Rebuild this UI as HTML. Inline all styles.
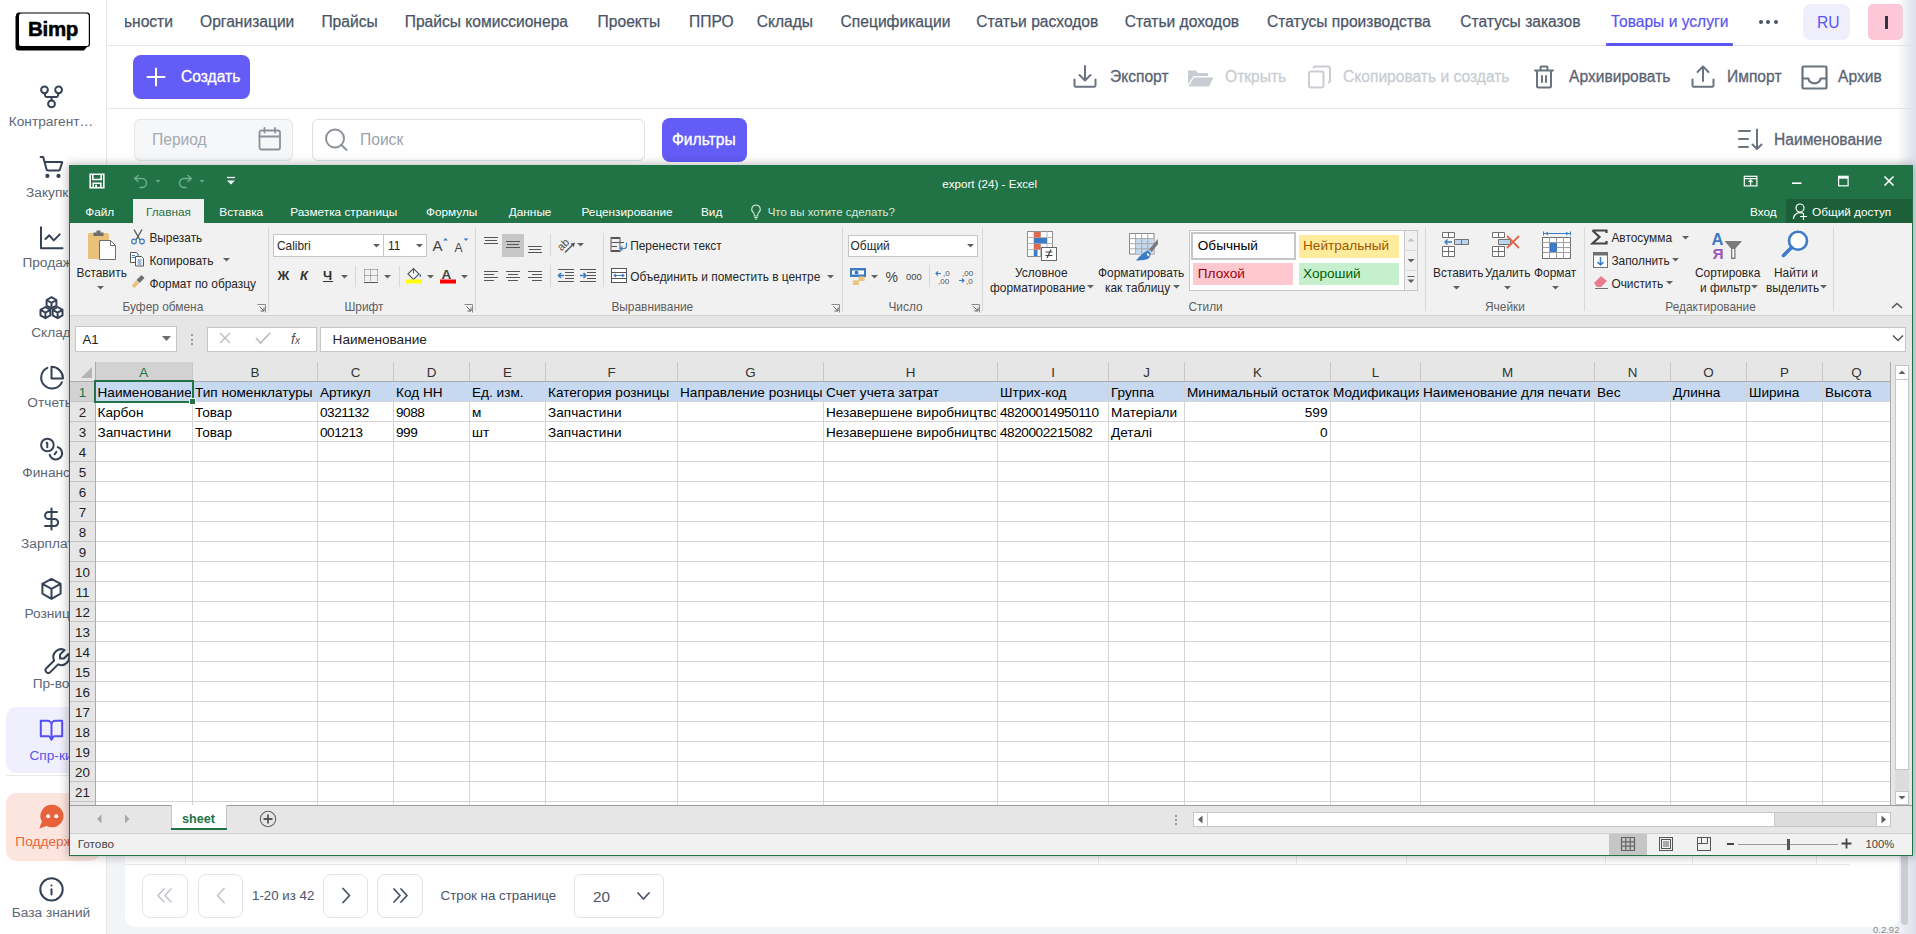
<!DOCTYPE html>
<html><head><meta charset="utf-8"><title>Bimp</title><style>
*{box-sizing:border-box;margin:0;padding:0}
html,body{width:1916px;height:934px;overflow:hidden;background:#f3f4f6;font-family:"Liberation Sans",sans-serif}
.a{position:absolute}
.t{position:absolute;white-space:nowrap;line-height:1}
/* Bimp app */
#side{position:absolute;left:0;top:0;width:107px;height:934px;background:#fff;border-right:1px solid #e6e8ec}
.sl{position:absolute;left:0;width:102px;text-align:center;font-size:13.7px;color:#5c6676;line-height:1;white-space:nowrap}
.sl2{position:absolute;white-space:nowrap;font-size:13.7px;color:#5c6676;line-height:1}
#top{position:absolute;left:107px;top:0;width:1809px;height:46px;background:#fff;border-bottom:1px solid #e5e7eb}
.nav{position:absolute;top:14px;font-size:15.6px;color:#4a5567;white-space:nowrap;line-height:1;-webkit-text-stroke:0.25px #4a5567}
#tb{position:absolute;left:107px;top:46px;width:1809px;height:63px;background:#fff;border-bottom:1px solid #e5e7eb}
#fr{position:absolute;left:107px;top:109px;width:1809px;height:60px;background:#fff}
.act{position:absolute;top:69px;font-size:16px;color:#4a5567;white-space:nowrap;line-height:1;-webkit-text-stroke:0.3px #4a5567}
.dis{color:#c8ccd2;-webkit-text-stroke:0.3px #c8ccd2}

</style></head><body>
<div id="side">
<svg class="a" style="left:14px;top:11px" width="77" height="41" viewBox="0 0 77 41"><path d="M5 1.5 H73 a3 3 0 0 1 3 3 V33 a3 3 0 0 1 -3 3 H5 a3 3 0 0 1 -3 -3 V4.5 a3 3 0 0 1 3 -3Z" fill="#000"/><path d="M2 5 L5 1.5 V36 H73 L70 39.5 H4.5 a3 3 0 0 1 -3 -3 V5Z" fill="#000"/><rect x="5" y="2.6" width="69.8" height="32.4" rx="2.6" fill="#fff"/></svg>
<div class="t" style="left:28px;top:19.3px;font-size:20.5px;font-weight:bold;color:#000;letter-spacing:-0.3px;-webkit-text-stroke:0.5px #000">Bimp</div>
<svg class="a" style="left:30px;top:80px" width="40" height="30" viewBox="0 0 40 30" fill="none" stroke="#354255" stroke-width="2" stroke-linecap="round" stroke-linejoin="round"><circle cx="14.5" cy="9.8" r="3.4"/><circle cx="28.6" cy="9.8" r="3.4"/><circle cx="21.5" cy="23.9" r="3.4"/><path d="M14.6 13.2 L15.2 15.9 a1.2 1.2 0 0 0 1.2 1 H26.7 a1.2 1.2 0 0 0 1.2 -1 L28.5 13.2 M21.5 16.9 V20.5"/></svg>
<div class="sl" style="top:115px">Контрагент…</div>
<svg class="a" style="left:30px;top:150px" width="40" height="30" viewBox="0 0 40 30" fill="none" stroke="#354255" stroke-width="2" stroke-linecap="round" stroke-linejoin="round"><path d="M10.6 6.9 H13.2 L16.5 19.3 a1.6 1.6 0 0 0 1.6 1.3 H28.5 a1.6 1.6 0 0 0 1.5 -1.3 L32.2 12.1 H14.4"/><circle cx="17.4" cy="25.9" r="1.1" fill="#354255"/><circle cx="28.5" cy="25.9" r="1.1" fill="#354255"/></svg>
<div class="sl" style="top:186px">Закупки</div>
<svg class="a" style="left:30px;top:222px" width="40" height="30" viewBox="0 0 40 30" fill="none" stroke="#354255" stroke-width="2" stroke-linecap="round" stroke-linejoin="round"><path d="M11 5.3 V26.3 H32.5 M15.5 17 L19.3 13.3 L23.8 18.4 L29.7 12.4"/></svg>
<div class="sl" style="top:256px">Продажи</div>
<svg class="a" style="left:30px;top:292px" width="40" height="30" viewBox="0 0 40 30" fill="none" stroke="#354255" stroke-width="2" stroke-linecap="round" stroke-linejoin="round"><path d="M21.5 5.2 L26.4 8 V13.6 L21.5 16.4 L16.6 13.6 V8Z M16.6 8 L21.5 10.8 L26.4 8 M21.5 10.8 V16.4"/><path d="M15.4 15 L20.3 17.8 V23.4 L15.4 26.2 L10.5 23.4 V17.8Z M10.5 17.8 L15.4 20.6 L20.3 17.8 M15.4 20.6 V26.2"/><path d="M27.6 15 L32.5 17.8 V23.4 L27.6 26.2 L22.7 23.4 V17.8Z M22.7 17.8 L27.6 20.6 L32.5 17.8 M27.6 20.6 V26.2"/></svg>
<div class="sl" style="top:326px">Склад</div>
<svg class="a" style="left:30px;top:362px" width="40" height="30" viewBox="0 0 40 30" fill="none" stroke="#354255" stroke-width="2" stroke-linecap="round" stroke-linejoin="round"><path d="M17.4 5.8 A10.9 10.9 0 1 0 32 20.2"/><path d="M21.5 4.8 V16.4 H33 A11.6 11.6 0 0 0 21.5 4.8Z"/></svg>
<div class="sl" style="top:396px">Отчеты</div>
<svg class="a" style="left:30px;top:433px" width="40" height="30" viewBox="0 0 40 30" fill="none" stroke="#354255" stroke-width="2" stroke-linecap="round" stroke-linejoin="round"><circle cx="17.4" cy="12" r="6.3"/><path d="M16.7 9.8 L17.3 10 V14.2"/><path d="M27.7 14.1 A6.3 6.3 0 1 1 19.7 21.7"/><path d="M24.6 21.3 L26.4 18.8"/></svg>
<div class="sl" style="top:466px">Финансы</div>
<svg class="a" style="left:30px;top:504px" width="40" height="30" viewBox="0 0 40 30" fill="none" stroke="#354255" stroke-width="2" stroke-linecap="round" stroke-linejoin="round"><path d="M27 7.9 H18.6 a3.55 3.55 0 0 0 0 7.1 H24.6 a3.5 3.5 0 0 1 0 7 H15 M21.5 4.6 V25.4"/></svg>
<div class="sl" style="top:537px">Зарплата</div>
<svg class="a" style="left:30px;top:574px" width="40" height="30" viewBox="0 0 40 30" fill="none" stroke="#354255" stroke-width="2" stroke-linecap="round" stroke-linejoin="round"><path d="M21.5 4.8 L30.6 9.8 V19.6 L21.5 24.8 L12.4 19.6 V9.8Z M12.4 9.8 L21.5 14.8 L30.6 9.8 M21.5 14.8 V24.8"/></svg>
<div class="sl" style="top:607px">Розница</div>
<svg class="a" style="left:30px;top:644px" width="40" height="30" viewBox="0 0 40 30" fill="none" stroke="#354255" stroke-width="2" stroke-linecap="round" stroke-linejoin="round"><g transform="translate(43 1.5) scale(-1.3 1.3)"><path d="M7 10h3v-3l-3.5 -3.5a6 6 0 0 1 8 8l6 6a2 2 0 0 1 -3 3l-6 -6a6 6 0 0 1 -8 -8l3.5 3.5" stroke-width="1.55"/></g></svg>
<div class="sl" style="top:677px">Пр-во</div>
<div class="a" style="left:6px;top:707px;width:94px;height:66px;border-radius:10px;background:#efeffd"></div>
<svg class="a" style="left:30px;top:714px" width="40" height="30" viewBox="0 0 40 30" fill="none" stroke="#5650f7" stroke-width="2" stroke-linecap="round" stroke-linejoin="round"><path d="M10.8 6.7 H17.5 a4 4 0 0 1 4 4 a4 4 0 0 1 4 -4 H32.2 V22.2 H24.3 a1.4 1.4 0 0 0 -1.2 .8 L21.5 25.8 L19.9 23 a1.4 1.4 0 0 0 -1.2 -.8 H10.8Z M21.5 10.7 V25"/></svg>
<div class="sl" style="top:749px;color:#5a55f0">Спр-ки</div>
<div class="a" style="left:6px;top:775px;width:94px;height:1px;background:#e6e8ec"></div>
<div class="a" style="left:6px;top:793px;width:94px;height:68px;border-radius:10px;background:#fde5df"></div>
<svg class="a" style="left:30px;top:800px" width="40" height="30" viewBox="0 0 40 30"><path d="M22.2 4.7 a11.4 11.3 0 1 1 -5.6 21.2 L9.3 28.6 L11.9 21.6 A11.4 11.3 0 0 1 22.2 4.7Z" fill="#e8633b"/><circle cx="18.1" cy="16.2" r="2" fill="#fff"/><circle cx="26.3" cy="16.2" r="2" fill="#fff"/></svg>
<div class="sl" style="top:835px;color:#e8633b">Поддержка</div>
<svg class="a" style="left:30px;top:872.8px" width="40" height="30" viewBox="0 0 40 30" fill="none" stroke="#354255" stroke-width="2" stroke-linecap="round" stroke-linejoin="round"><circle cx="21.5" cy="16.4" r="11.2"/><path d="M21.5 12.5 h0.01 M21.5 16.3 V21.6"/></svg>
<div class="sl" style="top:906px">База знаний</div>
</div>
<div class="a" style="left:107px;top:0;width:1809px;height:45px;background:#fff"></div>
<div class="a" style="left:107px;top:45px;width:1809px;height:1px;background:#e4e6ea"></div>
<div class="a" style="left:107px;top:46px;width:1809px;height:62px;background:#fff"></div>
<div class="a" style="left:107px;top:108px;width:1809px;height:1px;background:#e4e6ea"></div>
<div class="a" style="left:107px;top:109px;width:1809px;height:60px;background:#fff"></div>
<div class="a" style="left:125px;top:169px;width:1774px;height:758px;background:#fff;border-radius:0 0 10px 10px"></div>
<div class="a" style="left:125px;top:864px;width:1725px;height:1px;background:#e8eaee"></div>
<div class="a" style="left:185px;top:850px;width:1px;height:14px;background:#e8eaee"></div>
<div class="a" style="left:1098px;top:850px;width:1px;height:14px;background:#e8eaee"></div>
<div class="a" style="left:1296px;top:850px;width:1px;height:14px;background:#e8eaee"></div>
<div class="a" style="left:1406px;top:850px;width:1px;height:14px;background:#e8eaee"></div>
<div class="a" style="left:1605px;top:850px;width:1px;height:14px;background:#e8eaee"></div>
<div class="a" style="left:1692px;top:850px;width:1px;height:14px;background:#e8eaee"></div>
<div class="a" style="left:1816px;top:850px;width:1px;height:14px;background:#e8eaee"></div>
<div class="a" style="left:125px;top:0;width:1620px;height:45px;overflow:hidden">
<div class="t" style="left:-1.0999999999999943px;top:14.19px;font-size:15.6px;color:#4a5567;-webkit-text-stroke:0.25px #4a5567;">ьности</div>
</div>
<div class="t" style="left:200px;top:14.19px;font-size:15.6px;color:#4a5567;-webkit-text-stroke:0.25px #4a5567;">Организации</div>
<div class="t" style="left:321.4px;top:14.19px;font-size:15.6px;color:#4a5567;-webkit-text-stroke:0.25px #4a5567;">Прайсы</div>
<div class="t" style="left:404.7px;top:14.19px;font-size:15.6px;color:#4a5567;-webkit-text-stroke:0.25px #4a5567;">Прайсы комиссионера</div>
<div class="t" style="left:597.6px;top:14.19px;font-size:15.6px;color:#4a5567;-webkit-text-stroke:0.25px #4a5567;">Проекты</div>
<div class="t" style="left:689px;top:14.19px;font-size:15.6px;color:#4a5567;-webkit-text-stroke:0.25px #4a5567;">ППРО</div>
<div class="t" style="left:756.7px;top:14.19px;font-size:15.6px;color:#4a5567;-webkit-text-stroke:0.25px #4a5567;">Склады</div>
<div class="t" style="left:840.6px;top:14.19px;font-size:15.6px;color:#4a5567;-webkit-text-stroke:0.25px #4a5567;">Спецификации</div>
<div class="t" style="left:976.3px;top:14.19px;font-size:15.6px;color:#4a5567;-webkit-text-stroke:0.25px #4a5567;">Статьи расходов</div>
<div class="t" style="left:1124.7px;top:14.19px;font-size:15.6px;color:#4a5567;-webkit-text-stroke:0.25px #4a5567;">Статьи доходов</div>
<div class="t" style="left:1267px;top:14.19px;font-size:15.6px;color:#4a5567;-webkit-text-stroke:0.25px #4a5567;">Статусы производства</div>
<div class="t" style="left:1460.3px;top:14.19px;font-size:15.6px;color:#4a5567;-webkit-text-stroke:0.25px #4a5567;">Статусы заказов</div>
<div class="t" style="left:1610.7px;top:14.19px;font-size:15.6px;color:#5b55f2;-webkit-text-stroke:0.2px #5b55f2;">Товары и услуги</div>
<div class="a" style="left:1606px;top:42.5px;width:127px;height:3px;background:#5b55f2;border-radius:1px"></div>
<div class="a" style="left:1758.5px;top:20px;width:4px;height:4px;border-radius:2px;background:#4a5567"></div>
<div class="a" style="left:1766px;top:20px;width:4px;height:4px;border-radius:2px;background:#4a5567"></div>
<div class="a" style="left:1773.5px;top:20px;width:4px;height:4px;border-radius:2px;background:#4a5567"></div>
<div class="a" style="left:1803px;top:4px;width:46.5px;height:35.8px;border-radius:8px;background:#efeffc"></div>
<div class="t" style="left:1817px;top:14.79px;font-size:15.6px;color:#5b55f2;">RU</div>
<div class="a" style="left:1868px;top:4px;width:35px;height:36px;border-radius:5px;background:#fdc7d7"></div>
<div class="a" style="left:1884.8px;top:16px;width:3px;height:13px;background:#2b3546"></div>
<div class="a" style="left:133px;top:55px;width:117px;height:43.5px;border-radius:8px;background:#645cf6"></div>
<svg class="a" style="left:145px;top:66px" width="22" height="22" viewBox="0 0 22 22" fill="none" stroke="#fff" stroke-width="2" stroke-linecap="round"><path d="M11 2.5V19.5M2.5 11H19.5"/></svg>
<div class="t" style="left:181px;top:69.49px;font-size:15.6px;color:#fff;-webkit-text-stroke:0.3px #fff;">Создать</div>
<svg class="a" style="left:1070px;top:62px" width="30" height="30" viewBox="0 0 30 30" fill="none" stroke="#6a7380" stroke-width="2" stroke-linecap="round" stroke-linejoin="round"><path d="M4.5 17.5V23.5a1.2 1.2 0 0 0 1.2 1.2H24.3a1.2 1.2 0 0 0 1.2 -1.2V17.5M15 4V18.5M9.5 13L15 18.5L20.5 13"/></svg>
<div class="t" style="left:1110px;top:69.49px;font-size:15.6px;color:#5a6472;-webkit-text-stroke:0.3px #5a6472;">Экспорт</div>
<svg class="a" style="left:1185px;top:62px" width="32" height="30" viewBox="0 0 32 30"><path d="M3 8.5 h8 l2 2.5 h10 v3 H8.5 L3 22.5Z" fill="#c9cdd3"/><path d="M8.8 15.5 H28.5 L24 24.5 H3.5Z" fill="#c9cdd3"/></svg>
<div class="t" style="left:1225px;top:69.49px;font-size:15.6px;color:#c9cdd3;-webkit-text-stroke:0.3px #c9cdd3;">Открыть</div>
<svg class="a" style="left:1304px;top:62px" width="30" height="30" viewBox="0 0 30 30" fill="none" stroke="#c9cdd3" stroke-width="2" stroke-linejoin="round"><rect x="5" y="9.5" width="14.5" height="16" rx="2"/><path d="M9.5 6.5 a2 2 0 0 1 2 -2 H24 a2 2 0 0 1 2 2 V18.5 a2 2 0 0 1 -2 2"/></svg>
<div class="t" style="left:1343px;top:69.49px;font-size:15.6px;color:#c9cdd3;-webkit-text-stroke:0.3px #c9cdd3;">Скопировать и создать</div>
<svg class="a" style="left:1529px;top:62px" width="30" height="30" viewBox="0 0 30 30" fill="none" stroke="#6a7380" stroke-width="2" stroke-linecap="round" stroke-linejoin="round"><path d="M6 8.5H24M11.5 8.5V5.5a1 1 0 0 1 1 -1H17.5a1 1 0 0 1 1 1V8.5M8 8.5V24a1.5 1.5 0 0 0 1.5 1.5H20.5a1.5 1.5 0 0 0 1.5 -1.5V8.5M13 14V20M17 14V20"/></svg>
<div class="t" style="left:1569px;top:69.49px;font-size:15.6px;color:#5a6472;-webkit-text-stroke:0.3px #5a6472;">Архивировать</div>
<svg class="a" style="left:1688px;top:62px" width="30" height="30" viewBox="0 0 30 30" fill="none" stroke="#6a7380" stroke-width="2" stroke-linecap="round" stroke-linejoin="round"><path d="M4.5 17.5V23.5a1.2 1.2 0 0 0 1.2 1.2H24.3a1.2 1.2 0 0 0 1.2 -1.2V17.5M15 19V4.5M9.5 10L15 4.5L20.5 10"/></svg>
<div class="t" style="left:1727px;top:69.49px;font-size:15.6px;color:#5a6472;-webkit-text-stroke:0.3px #5a6472;">Импорт</div>
<svg class="a" style="left:1799px;top:62px" width="30" height="30" viewBox="0 0 30 30" fill="none" stroke="#6a7380" stroke-width="2.2" stroke-linejoin="round"><rect x="3.5" y="4.5" width="24" height="22" rx="1"/><path d="M3.5 16.5H9.5a5.5 4.5 0 0 0 12 0H27.5"/></svg>
<div class="t" style="left:1838px;top:69.49px;font-size:15.6px;color:#5a6472;-webkit-text-stroke:0.3px #5a6472;">Архив</div>
<div class="a" style="left:133.5px;top:118.5px;width:159px;height:42.5px;border-radius:6px;background:#f6f7f8;border:1px solid #e3e5e8"></div>
<div class="t" style="left:152px;top:132.19px;font-size:15.6px;color:#a3a9b2;">Период</div>
<svg class="a" style="left:255px;top:124px" width="30" height="30" viewBox="0 0 30 30" fill="none" stroke="#8a919b" stroke-width="1.8" stroke-linecap="round" stroke-linejoin="round"><rect x="4.5" y="6.5" width="20.5" height="19" rx="2"/><path d="M4.5 12.5H25M9.5 3.8V8.5M20 3.8V8.5"/></svg>
<div class="a" style="left:311.5px;top:118.5px;width:333.5px;height:42.5px;border-radius:6px;background:#fff;border:1px solid #dcdfe4"></div>
<svg class="a" style="left:321px;top:125px" width="30" height="30" viewBox="0 0 30 30" fill="none" stroke="#8a919b" stroke-width="2" stroke-linecap="round"><circle cx="14" cy="13.5" r="9"/><path d="M20.5 20L25.5 25"/></svg>
<div class="t" style="left:360px;top:132.19px;font-size:15.6px;color:#9aa1ab;">Поиск</div>
<div class="a" style="left:662px;top:118px;width:85px;height:43.5px;border-radius:8px;background:#645cf6"></div>
<div class="t" style="left:672px;top:132.19px;font-size:15.6px;color:#fff;-webkit-text-stroke:0.35px #fff;">Фильтры</div>
<svg class="a" style="left:1735px;top:124px" width="30" height="30" viewBox="0 0 30 30" fill="none" stroke="#6a7380" stroke-width="2" stroke-linecap="round" stroke-linejoin="round"><path d="M4 7H15M4 15H13M4 23H13M22 5.5V25M17.5 20.5L22 25L26.5 20.5"/></svg>
<div class="t" style="left:1774px;top:132.19px;font-size:15.6px;color:#5a6472;-webkit-text-stroke:0.3px #5a6472;">Наименование</div>
<div class="a" style="left:142px;top:874px;width:45.5px;height:43.5px;border-radius:8px;border:1px solid #e1e4e8;background:#fff"></div><svg class="a" style="left:142px;top:874px" width="46" height="44" viewBox="0 0 46 44" fill="none" stroke="#c3c8ce" stroke-width="1.8" stroke-linecap="round" stroke-linejoin="round"><path d="M22 15L16 21.5L22 28M29 15L23 21.5L29 28"/></svg>
<div class="a" style="left:197.5px;top:874px;width:45.5px;height:43.5px;border-radius:8px;border:1px solid #e1e4e8;background:#fff"></div><svg class="a" style="left:197.5px;top:874px" width="46" height="44" viewBox="0 0 46 44" fill="none" stroke="#c3c8ce" stroke-width="1.8" stroke-linecap="round" stroke-linejoin="round"><path d="M26 14.5L19.5 21.5L26 28.5"/></svg>
<div class="t" style="left:252px;top:889.24px;font-size:13.3px;color:#4a5567;">1-20 из 42</div>
<div class="a" style="left:322.6px;top:874px;width:45.5px;height:43.5px;border-radius:8px;border:1px solid #e1e4e8;background:#fff"></div><svg class="a" style="left:322.6px;top:874px" width="46" height="44" viewBox="0 0 46 44" fill="none" stroke="#4a5567" stroke-width="1.8" stroke-linecap="round" stroke-linejoin="round"><path d="M20 14.5L26.5 21.5L20 28.5"/></svg>
<div class="a" style="left:377px;top:874px;width:45.5px;height:43.5px;border-radius:8px;border:1px solid #e1e4e8;background:#fff"></div><svg class="a" style="left:377px;top:874px" width="46" height="44" viewBox="0 0 46 44" fill="none" stroke="#4a5567" stroke-width="1.8" stroke-linecap="round" stroke-linejoin="round"><path d="M17 15L23 21.5L17 28M24 15L30 21.5L24 28"/></svg>
<div class="t" style="left:440.6px;top:889.24px;font-size:13.3px;color:#4a5567;">Строк на странице</div>
<div class="a" style="left:574px;top:874px;width:90px;height:44px;border-radius:6px;border:1px solid #dfe2e6;background:#fff"></div>
<div class="t" style="left:593px;top:889.05px;font-size:15.3px;color:#4a5567;">20</div>
<svg class="a" style="left:630px;top:885px" width="26" height="22" viewBox="0 0 26 22" fill="none" stroke="#4a5567" stroke-width="1.8" stroke-linecap="round" stroke-linejoin="round"><path d="M8 8L13.5 14L19 8"/></svg>
<div class="a" style="left:1897px;top:0;width:19px;height:934px;background:linear-gradient(to right,rgba(230,232,240,0),#dcdfeb)"></div>
<div class="a" style="left:1901px;top:600px;width:7px;height:325px;border-radius:4px;background:#c9cdd5"></div>
<div class="t" style="left:1873px;top:925px;font-size:9.5px;color:#8a8a8a">0.2.92</div><div class="a" style="left:69px;top:165px;width:1844px;height:691px;background:#f1f1f1;box-shadow:0 0 9px 1px rgba(0,0,0,0.28);border:1px solid #217346"></div>
<div class="a" style="left:69px;top:165px;width:1844px;height:58px;background:#217346;"></div>
<svg class="a" style="left:86px;top:170px" width="22" height="22" viewBox="0 0 22 22" fill="none" stroke="#fff" stroke-width="1.6"><path d="M4.2 4.2H17.8V17.8H4.2Z M6.8 4.2V9.5H15.2V4.2 M7.2 17.8V13.3H14.8V17.8"/><path d="M9.2 14.8H11V17.5H9.2Z" fill="#fff" stroke="none"/></svg>
<svg class="a" style="left:128px;top:170px" width="110" height="22" viewBox="0 0 110 22" fill="none" stroke="#6fae8c" stroke-width="1.5" stroke-linecap="round" stroke-linejoin="round"><path d="M6.5 8.5L10 5.5M6.5 8.5L10 11.5M6.5 8.5H14a4.5 4.5 0 0 1 0 9H12"/><path d="M27.5 10H32.5L30 12.5Z" fill="#6fae8c" stroke="none"/><path d="M63.5 8.5L60 5.5M63.5 8.5L60 11.5M63.5 8.5H56a4.5 4.5 0 0 0 0 9H58"/><path d="M71.5 10H76.5L74 12.5Z" fill="#6fae8c" stroke="none"/></svg>
<svg class="a" style="left:224px;top:172px" width="14" height="16" viewBox="0 0 14 16"><path d="M3 5.5H11" stroke="#fff" stroke-width="1.3"/><path d="M3 8.5H11L7 12.5Z" fill="#fff"/></svg>
<div class="t" style="left:942.3px;top:178.00px;font-size:11.6px;color:#fff;">export (24) - Excel</div>
<svg class="a" style="left:1740px;top:170px" width="160" height="22" viewBox="0 0 160 22" fill="none" stroke="#fff" stroke-width="1.2"><rect x="4.3" y="6.3" width="12.6" height="9.6"/><path d="M4.3 8.6H16.9M10.6 15.4V10.2M8.6 12.2L10.6 10.2L12.6 12.2"/><path d="M52 13.2H61.5" stroke-width="1.6"/><rect x="98.6" y="6.3" width="9.5" height="9.5"/><path d="M98.6 7.7H108.1" stroke-width="2"/><path d="M144.5 6.5L153.5 15.5M153.5 6.5L144.5 15.5" stroke-width="1.7"/></svg>
<div class="a" style="left:133px;top:199px;width:71px;height:24px;background:#f1f1f1;"></div>
<div class="t" style="left:85.2px;top:207.00px;font-size:11.8px;color:#fff;">Файл</div>
<div class="t" style="left:146px;top:207.00px;font-size:11.8px;color:#217346;">Главная</div>
<div class="t" style="left:219.3px;top:207.00px;font-size:11.8px;color:#fff;">Вставка</div>
<div class="t" style="left:290.2px;top:207.00px;font-size:11.8px;color:#fff;">Разметка страницы</div>
<div class="t" style="left:426px;top:207.00px;font-size:11.8px;color:#fff;">Формулы</div>
<div class="t" style="left:508.8px;top:207.00px;font-size:11.8px;color:#fff;">Данные</div>
<div class="t" style="left:581.5px;top:207.00px;font-size:11.8px;color:#fff;">Рецензирование</div>
<div class="t" style="left:701px;top:207.00px;font-size:11.8px;color:#fff;">Вид</div>
<svg class="a" style="left:748px;top:202px" width="16" height="20" viewBox="0 0 16 20" fill="none" stroke="#c8e0d2" stroke-width="1.1"><path d="M8 3a4.3 4.3 0 0 0 -2.6 7.7c.6 .5 .9 1.2 .9 2V14h3.4v-1.3c0-.8 .3-1.5 .9-2A4.3 4.3 0 0 0 8 3Z M6.3 15.5h3.4M6.8 17h2.4"/></svg>
<div class="t" style="left:767.7px;top:207.00px;font-size:11.5px;color:#d9e9df;">Что вы хотите сделать?</div>
<div class="t" style="left:1750px;top:207.00px;font-size:11.8px;color:#fff;">Вход</div>
<div class="a" style="left:1786px;top:199px;width:126px;height:24px;background:#1c5f39;"></div>
<svg class="a" style="left:1790px;top:200px" width="20" height="22" viewBox="0 0 20 22" fill="none" stroke="#fff" stroke-width="1.2" stroke-linecap="round"><circle cx="10" cy="8" r="4"/><path d="M3.5 18.5a6.5 6 0 0 1 9.5 -5.2M13.5 13.5V19.5M10.5 16.5H16.5"/></svg>
<div class="t" style="left:1812px;top:207.00px;font-size:11.8px;color:#fff;">Общий доступ</div><div class="a" style="left:70px;top:315px;width:1842px;height:1px;background:#d4d4d4;"></div>
<div class="a" style="left:268px;top:227px;width:1px;height:84px;background:#d8d8d8;"></div>
<div class="a" style="left:475px;top:227px;width:1px;height:84px;background:#d8d8d8;"></div>
<div class="a" style="left:842px;top:227px;width:1px;height:84px;background:#d8d8d8;"></div>
<div class="a" style="left:982px;top:227px;width:1px;height:84px;background:#d8d8d8;"></div>
<div class="a" style="left:1425px;top:227px;width:1px;height:84px;background:#d8d8d8;"></div>
<div class="a" style="left:1584px;top:227px;width:1px;height:84px;background:#d8d8d8;"></div>
<div class="a" style="left:1833px;top:227px;width:1px;height:84px;background:#d8d8d8;"></div>
<div class="t" style="left:122.5px;top:302.00px;font-size:11.9px;color:#5e5e5e;">Буфер обмена</div>
<div class="t" style="left:344.4px;top:302.00px;font-size:11.9px;color:#5e5e5e;">Шрифт</div>
<div class="t" style="left:611.4px;top:302.00px;font-size:11.9px;color:#5e5e5e;">Выравнивание</div>
<div class="t" style="left:888.4px;top:302.00px;font-size:11.9px;color:#5e5e5e;">Число</div>
<div class="t" style="left:1188.5px;top:302.00px;font-size:11.9px;color:#5e5e5e;">Стили</div>
<div class="t" style="left:1485px;top:302.00px;font-size:11.9px;color:#5e5e5e;">Ячейки</div>
<div class="t" style="left:1665.3px;top:302.00px;font-size:11.9px;color:#5e5e5e;">Редактирование</div>
<svg class="a" style="left:257px;top:303.5px" width="9" height="9" viewBox="0 0 9 9" ><path d="M0.5 0.5H8.5V8.5" fill="none" stroke="#8a8a8a" stroke-width="1"/><path d="M2.5 2.5L7 7M7 3.5V7H3.5" fill="none" stroke="#606060" stroke-width="1"/></svg>
<svg class="a" style="left:464px;top:303.5px" width="9" height="9" viewBox="0 0 9 9" ><path d="M0.5 0.5H8.5V8.5" fill="none" stroke="#8a8a8a" stroke-width="1"/><path d="M2.5 2.5L7 7M7 3.5V7H3.5" fill="none" stroke="#606060" stroke-width="1"/></svg>
<svg class="a" style="left:831px;top:303.5px" width="9" height="9" viewBox="0 0 9 9" ><path d="M0.5 0.5H8.5V8.5" fill="none" stroke="#8a8a8a" stroke-width="1"/><path d="M2.5 2.5L7 7M7 3.5V7H3.5" fill="none" stroke="#606060" stroke-width="1"/></svg>
<svg class="a" style="left:971px;top:303.5px" width="9" height="9" viewBox="0 0 9 9" ><path d="M0.5 0.5H8.5V8.5" fill="none" stroke="#8a8a8a" stroke-width="1"/><path d="M2.5 2.5L7 7M7 3.5V7H3.5" fill="none" stroke="#606060" stroke-width="1"/></svg>
<svg class="a" style="left:1890px;top:301px" width="14" height="9" viewBox="0 0 14 9" ><path d="M2 7L7 2.5L12 7" fill="none" stroke="#555" stroke-width="1.5"/></svg>
<svg class="a" style="left:86px;top:228px" width="32" height="34" viewBox="0 0 32 34" ><rect x="2" y="5" width="21" height="26" rx="1.5" fill="#e8c27a"/><path d="M7.5 4.5H17.5V8H7.5Z M10.5 2.5H14.5V5H10.5Z" fill="#6d6d6d"/><path d="M13.5 12.5H24.5L29.5 17.5V31.5H13.5Z" fill="#fff" stroke="#6d6d6d" stroke-width="1"/><path d="M24.5 12.5V17.5H29.5" fill="none" stroke="#6d6d6d" stroke-width="1"/></svg>
<div class="t" style="left:76.5px;top:268.00px;font-size:11.9px;color:#262626;">Вставить</div>
<svg class="a" style="left:97.0px;top:286px" width="7" height="4" viewBox="0 0 7 4" ><path d="M0 0H7L3.5 3.5Z" fill="#606060"/></svg>
<svg class="a" style="left:129px;top:228px" width="18" height="18" viewBox="0 0 18 18" ><path d="M5 1.5L11 12M13 1.5L7 12" stroke="#555" stroke-width="1.3" fill="none"/><circle cx="5" cy="13.5" r="2.3" fill="none" stroke="#3d7bc6" stroke-width="1.2"/><circle cx="13" cy="13.5" r="2.3" fill="none" stroke="#3d7bc6" stroke-width="1.2"/></svg>
<div class="t" style="left:149.4px;top:233.00px;font-size:11.9px;color:#262626;">Вырезать</div>
<svg class="a" style="left:129px;top:251px" width="18" height="16" viewBox="0 0 18 16" ><path d="M1.5 1.5H7.5L9 3V11.5H1.5Z" fill="#fff" stroke="#555" stroke-width="1"/><path d="M6.5 5.5H12.5L14.5 7.5V15H6.5Z" fill="#fff" stroke="#555" stroke-width="1"/><path d="M3 4.5H6M3 6.5H6M8.5 9H12.5M8.5 11H12.5M8.5 13H12.5" stroke="#3d7bc6" stroke-width="1"/></svg>
<div class="t" style="left:149.4px;top:256.00px;font-size:11.9px;color:#262626;">Копировать</div>
<svg class="a" style="left:222.5px;top:258px" width="7" height="4" viewBox="0 0 7 4" ><path d="M0 0H7L3.5 3.5Z" fill="#606060"/></svg>
<svg class="a" style="left:129px;top:273px" width="18" height="16" viewBox="0 0 18 16" ><path d="M2.5 13L7 7.5L10 10.5L5.5 15Z" fill="#e8c27a"/><path d="M7.5 7L12.5 2L15.5 5L10.5 10Z" fill="#6d6d6d"/></svg>
<div class="t" style="left:149.4px;top:279.00px;font-size:11.9px;color:#262626;">Формат по образцу</div>
<div class="a" style="left:273px;top:234px;width:111px;height:23px;background:#fff;border:1px solid #c6c6c6"></div>
<div class="t" style="left:277px;top:241.00px;font-size:11.9px;color:#262626;">Calibri</div>
<svg class="a" style="left:372.5px;top:244px" width="7" height="4" viewBox="0 0 7 4" ><path d="M0 0H7L3.5 3.5Z" fill="#606060"/></svg>
<div class="a" style="left:383px;top:234px;width:44px;height:23px;background:#fff;border:1px solid #c6c6c6"></div>
<div class="t" style="left:388px;top:241.00px;font-size:11.9px;color:#262626;">11</div>
<svg class="a" style="left:416.0px;top:244px" width="7" height="4" viewBox="0 0 7 4" ><path d="M0 0H7L3.5 3.5Z" fill="#606060"/></svg>
<svg class="a" style="left:430px;top:235px" width="40" height="20" viewBox="0 0 40 20" ><text x="2.5" y="16" font-family="Liberation Sans" font-size="15" fill="#444">A</text><path d="M13 5.5L15.5 3L18 5.5Z" fill="#3d7bc6"/><text x="24.5" y="16.5" font-family="Liberation Sans" font-size="12" fill="#444">A</text><path d="M33.5 3.5H38.5L36 6Z" fill="#3d7bc6"/></svg>
<div class="t" style="left:277.5px;top:269.00px;font-size:13px;color:#333;font-weight:bold;">Ж</div>
<div class="t" style="left:300px;top:269.00px;font-size:13px;color:#333;font-weight:bold;font-style:italic">К</div>
<div class="t" style="left:323px;top:269.00px;font-size:13px;color:#333;font-weight:bold;">Ч</div>
<div class="a" style="left:323px;top:281px;width:10px;height:1px;background:#333;"></div>
<svg class="a" style="left:340.5px;top:275px" width="7" height="4" viewBox="0 0 7 4" ><path d="M0 0H7L3.5 3.5Z" fill="#606060"/></svg>
<div class="a" style="left:355px;top:266px;width:1px;height:21px;background:#d8d8d8;"></div>
<svg class="a" style="left:362px;top:267px" width="17" height="17" viewBox="0 0 17 17" ><path d="M2.5 2.5H15.5M2.5 2.5V14.5M15.5 2.5V14.5M8.5 2.5V14.5M2.5 8.5H15.5" fill="none" stroke="#707070" stroke-width="1" stroke-dasharray="1 1"/><path d="M2 15.5H16" stroke="#555" stroke-width="1"/></svg>
<svg class="a" style="left:383.5px;top:275px" width="7" height="4" viewBox="0 0 7 4" ><path d="M0 0H7L3.5 3.5Z" fill="#606060"/></svg>
<div class="a" style="left:399px;top:266px;width:1px;height:21px;background:#d8d8d8;"></div>
<svg class="a" style="left:404px;top:265px" width="20" height="22" viewBox="0 0 20 22" ><path d="M4 9L9.5 3.5L15 9L9.5 14.5Z" fill="#fff" stroke="#555" stroke-width="1.1"/><path d="M9.5 3.5V8.5" stroke="#555" stroke-width="1.1"/><path d="M16 8.5c1.2 1.6 1.4 2.8 .7 3.3s-1.6 -.2 -1.3 -1.2Z" fill="#3d7bc6"/><rect x="2" y="14.5" width="16" height="4" fill="#ffff00"/></svg>
<svg class="a" style="left:426.5px;top:275px" width="7" height="4" viewBox="0 0 7 4" ><path d="M0 0H7L3.5 3.5Z" fill="#606060"/></svg>
<svg class="a" style="left:438px;top:265px" width="20" height="22" viewBox="0 0 20 22" ><text x="3.5" y="14.3" font-family="Liberation Sans" font-size="13.5" font-weight="bold" fill="#444">A</text><rect x="2" y="14.5" width="16" height="4" fill="#ff0000"/></svg>
<svg class="a" style="left:460.5px;top:275px" width="7" height="4" viewBox="0 0 7 4" ><path d="M0 0H7L3.5 3.5Z" fill="#606060"/></svg>
<div class="a" style="left:502px;top:234px;width:22px;height:23px;background:#c6c6c6;"></div>
<svg class="a" style="left:483px;top:234px" width="16" height="20" viewBox="0 0 16 20" ><path d="M1 3.5H15M2 6.5H14M1 9.5H15" stroke="#555" stroke-width="1.1" fill="none"/></svg>
<svg class="a" style="left:505px;top:235px" width="16" height="20" viewBox="0 0 16 20" ><path d="M1 6.5H15M2 9.5H14M1 12.5H15" stroke="#555" stroke-width="1.1" fill="none"/></svg>
<svg class="a" style="left:527px;top:236px" width="16" height="20" viewBox="0 0 16 20" ><path d="M1 10.5H15M2 13.5H14M1 16.5H15" stroke="#555" stroke-width="1.1" fill="none"/></svg>
<svg class="a" style="left:483px;top:269px" width="16" height="16" viewBox="0 0 16 16" ><path d="M1 2.5H15M1 5.5H11M1 8.5H15M1 11.5H11" stroke="#555" stroke-width="1.1" fill="none"/></svg>
<svg class="a" style="left:505px;top:269px" width="16" height="16" viewBox="0 0 16 16" ><path d="M1 2.5H15M3 5.5H13M1 8.5H15M3 11.5H13" stroke="#555" stroke-width="1.1" fill="none"/></svg>
<svg class="a" style="left:527px;top:269px" width="16" height="16" viewBox="0 0 16 16" ><path d="M1 2.5H15M5 5.5H15M1 8.5H15M5 11.5H15" stroke="#555" stroke-width="1.1" fill="none"/></svg>
<div class="a" style="left:550px;top:234px;width:1px;height:22px;background:#d8d8d8;"></div>
<div class="a" style="left:550px;top:265px;width:1px;height:22px;background:#d8d8d8;"></div>
<svg class="a" style="left:556px;top:236px" width="22" height="20" viewBox="0 0 22 20" ><text x="0" y="0" font-family="Liberation Sans" font-size="11" fill="#505050" transform="translate(5.5 15.5) rotate(-45)">ab</text><path d="M9 16.5L18 7.5" stroke="#505050" stroke-width="1.2"/><path d="M19 6.5L14.5 7.8L17.7 11Z" fill="#505050"/></svg>
<svg class="a" style="left:576.5px;top:243px" width="7" height="4" viewBox="0 0 7 4" ><path d="M0 0H7L3.5 3.5Z" fill="#606060"/></svg>
<svg class="a" style="left:557px;top:268px" width="40" height="16" viewBox="0 0 40 16" ><path d="M1 1.5H17M8 4.5H17M8 7.5H17M8 10.5H17M1 13.5H17" stroke="#555" stroke-width="1.1" fill="none"/><path d="M1.5 7.5H7M4 5L1.5 7.5L4 10" stroke="#3d7bc6" stroke-width="1.6" fill="none"/><path d="M23 1.5H39M30 4.5H39M30 7.5H39M30 10.5H39M23 13.5H39" stroke="#555" stroke-width="1.1" fill="none"/><path d="M23 7.5H29M26.5 5L29 7.5L26.5 10" stroke="#3d7bc6" stroke-width="1.6" fill="none"/></svg>
<div class="a" style="left:603.4px;top:233px;width:1px;height:54px;background:#d8d8d8;"></div>
<svg class="a" style="left:610px;top:236px" width="18" height="18" viewBox="0 0 18 18" ><path d="M1.5 2.5H9.5M1.5 6.5H14M1.5 10.5H7M1.5 14.5H9.5" stroke="#555" stroke-width="1.1" fill="none"/><rect x="1" y="1.5" width="9" height="14" fill="none" stroke="#555" stroke-width="1"/><path d="M16.5 6.5V10a2.5 2.5 0 0 1 -2.5 2.5H10.5M12.5 10.5L10.5 12.5L12.5 14.5" stroke="#3d7bc6" stroke-width="1.2" fill="none"/></svg>
<div class="t" style="left:630.2px;top:241.00px;font-size:11.9px;color:#262626;">Перенести текст</div>
<svg class="a" style="left:610px;top:267px" width="18" height="18" viewBox="0 0 18 18" ><rect x="1.5" y="1.5" width="15" height="14" fill="#fff" stroke="#555" stroke-width="1"/><path d="M1.5 5.5H16.5M1.5 11.5H16.5" stroke="#555" stroke-width="1"/><path d="M4 8.5H14M6 6.8L4 8.5L6 10.2M12 6.8L14 8.5L12 10.2" stroke="#3d7bc6" stroke-width="1.1" fill="none"/></svg>
<div class="t" style="left:630.2px;top:272.00px;font-size:11.9px;color:#262626;">Объединить и поместить в центре</div>
<svg class="a" style="left:826.5px;top:275px" width="7" height="4" viewBox="0 0 7 4" ><path d="M0 0H7L3.5 3.5Z" fill="#606060"/></svg>
<div class="a" style="left:847.5px;top:234.5px;width:130.5px;height:22.5px;background:#fff;border:1px solid #c6c6c6"></div>
<div class="t" style="left:850.6px;top:241.00px;font-size:11.9px;color:#262626;">Общий</div>
<svg class="a" style="left:966.5px;top:244px" width="7" height="4" viewBox="0 0 7 4" ><path d="M0 0H7L3.5 3.5Z" fill="#606060"/></svg>
<svg class="a" style="left:848px;top:266px" width="20" height="20" viewBox="0 0 20 20" ><rect x="2" y="2" width="16" height="9" fill="#3d7bc6"/><path d="M4 4.5H16V8.5H4Z" fill="#fff"/><path d="M2 2h2.5l-2.5 2.5Z M18 2h-2.5l2.5 2.5Z M2 11h2.5l-2.5 -2.5Z" fill="#3d7bc6"/><circle cx="8.5" cy="6.5" r="2" fill="#3d7bc6"/><ellipse cx="13.5" cy="11.5" rx="3.5" ry="1.2" fill="#e8c27a"/><ellipse cx="13.5" cy="13.8" rx="3.5" ry="1.2" fill="#e8c27a"/><ellipse cx="8" cy="15.5" rx="3.5" ry="1.2" fill="#e8c27a"/><ellipse cx="8" cy="17.8" rx="3.5" ry="1.2" fill="#e8c27a"/></svg>
<svg class="a" style="left:870.5px;top:275px" width="7" height="4" viewBox="0 0 7 4" ><path d="M0 0H7L3.5 3.5Z" fill="#606060"/></svg>
<div class="t" style="left:885.5px;top:270.00px;font-size:14px;color:#444;">%</div>
<div class="t" style="left:906px;top:272.00px;font-size:9.5px;color:#444;">000</div>
<div class="a" style="left:929px;top:265px;width:1px;height:22px;background:#d8d8d8;"></div>
<svg class="a" style="left:935px;top:268px" width="44" height="18" viewBox="0 0 44 18" ><path d="M1 5.5H6M3 3.5L1 5.5L3 7.5" fill="none" stroke="#3d7bc6" stroke-width="1.1"/><text x="8" y="8" font-family="Liberation Sans" font-size="8" fill="#555">,0</text><text x="3" y="16" font-family="Liberation Sans" font-size="8" fill="#555">,00</text><text x="27" y="8" font-family="Liberation Sans" font-size="8" fill="#555">,00</text><path d="M24 12.5H29M27 10.5L29 12.5L27 14.5" fill="none" stroke="#3d7bc6" stroke-width="1.1"/><text x="31" y="16" font-family="Liberation Sans" font-size="8" fill="#555">,0</text></svg>
<svg class="a" style="left:1026px;top:230px" width="32" height="32" viewBox="0 0 32 32" ><rect x="1.5" y="1.5" width="25" height="25" fill="#fff" stroke="#8c8c8c" stroke-width="1"/><path d="M1.5 7.5H26.5M1.5 13.5H26.5M1.5 19.5H26.5M8 1.5V26.5M14.5 1.5V26.5M21 1.5V26.5" stroke="#b8b8b8" stroke-width="1"/><rect x="8" y="2" width="6.5" height="5.5" fill="#e0674b"/><rect x="8" y="8" width="13" height="5.5" fill="#3d7bc6"/><rect x="8" y="14" width="6.5" height="5.5" fill="#e0674b"/><rect x="8" y="20" width="3.5" height="6" fill="#3d7bc6"/><rect x="15.5" y="17.5" width="15" height="13" fill="#fff" stroke="#666" stroke-width="1"/><path d="M19.5 22H26.5M19.5 25.5H26.5M25 19.5L21 28" stroke="#444" stroke-width="1.2"/></svg>
<div class="t" style="left:1015px;top:268.00px;font-size:11.9px;color:#262626;">Условное</div>
<div class="t" style="left:990px;top:283.00px;font-size:11.9px;color:#262626;">форматирование</div>
<svg class="a" style="left:1086.5px;top:285px" width="7" height="4" viewBox="0 0 7 4" ><path d="M0 0H7L3.5 3.5Z" fill="#606060"/></svg>
<svg class="a" style="left:1126px;top:230px" width="34" height="32" viewBox="0 0 34 32" ><rect x="3.5" y="3.5" width="24.5" height="20.5" fill="#fff" stroke="#8a8a8a" stroke-width="1"/><rect x="9.6" y="8.6" width="18.4" height="15.4" fill="#c5d9f0"/><path d="M3.5 8.6H28M3.5 13.7H28M3.5 18.8H28M9.6 3.5V24M15.7 3.5V24M21.8 3.5V24" stroke="#a8a8a8" stroke-width="1"/><path d="M31.8 9L23 19.5L25.8 22L32 14Z" fill="#7a7a7a"/><path d="M22 20.5L25 23.3L23.5 27.5C21.8 29.8 17 30.5 10 30.5C13.5 26 17.5 22.5 22 20.5Z" fill="#3d7bc6"/><path d="M20.5 23.5a2 2 0 0 1 3 1.5l-1.5 1.5Z" fill="#fff"/></svg>
<div class="t" style="left:1098px;top:268.00px;font-size:11.9px;color:#262626;">Форматировать</div>
<div class="t" style="left:1105px;top:283.00px;font-size:11.9px;color:#262626;">как таблицу</div>
<svg class="a" style="left:1172.5px;top:285px" width="7" height="4" viewBox="0 0 7 4" ><path d="M0 0H7L3.5 3.5Z" fill="#606060"/></svg>
<div class="a" style="left:1189.2px;top:229.5px;width:229px;height:61.5px;background:#fff;border:1px solid #c6c6c6"></div>
<div class="a" style="left:1191.2px;top:232px;width:105px;height:28px;background:#fff;border:2px solid #c6c6c6"></div>
<div class="t" style="left:1197.8px;top:239.00px;font-size:13.6px;color:#000;">Обычный</div>
<div class="a" style="left:1299px;top:235px;width:100px;height:22.5px;background:#ffeb9c;"></div>
<div class="t" style="left:1303px;top:239.00px;font-size:13.6px;color:#9c5700;">Нейтральный</div>
<div class="a" style="left:1193px;top:263px;width:100px;height:22px;background:#ffc7ce;"></div>
<div class="t" style="left:1197.8px;top:267.00px;font-size:13.6px;color:#9c0006;">Плохой</div>
<div class="a" style="left:1299px;top:263px;width:100px;height:22px;background:#c6efce;"></div>
<div class="t" style="left:1303px;top:267.00px;font-size:13.6px;color:#006100;">Хороший</div>
<div class="a" style="left:1403.5px;top:229.5px;width:14.5px;height:61.5px;background:#f1f1f1;border:1px solid #c6c6c6"></div>
<div class="a" style="left:1404px;top:249.5px;width:13.5px;height:1px;background:#dadada;"></div>
<div class="a" style="left:1404px;top:269.5px;width:13.5px;height:1px;background:#dadada;"></div>
<svg class="a" style="left:1404px;top:236px" width="14" height="8" viewBox="0 0 14 8" ><path d="M3.5 5.5H10.5L7 2Z" fill="#c4c4c4"/></svg>
<svg class="a" style="left:1404px;top:257px" width="14" height="8" viewBox="0 0 14 8" ><path d="M3.5 2H10.5L7 5.5Z" fill="#606060"/></svg>
<svg class="a" style="left:1404px;top:275px" width="14" height="10" viewBox="0 0 14 10" ><path d="M3.5 1.5H10.5" stroke="#606060" stroke-width="1"/><path d="M3.5 4.5H10.5L7 8Z" fill="#606060"/></svg>
<svg class="a" style="left:1441px;top:230px" width="30" height="32" viewBox="0 0 30 32" ><path d="M1.5 2.5H13.5V7.5H1.5Z M7.5 2.5V7.5 M1.5 16.5H13.5V26.5H1.5Z M1.5 21.5H13.5M7.5 16.5V26.5" fill="#fff" stroke="#707070" stroke-width="1"/><path d="M13.5 9.5H27.5V14.5H13.5Z M20.5 9.5V14.5" fill="#bcd4ee" stroke="#707070" stroke-width="1"/><path d="M4 12H11M6.5 9.5L4 12L6.5 14.5" fill="none" stroke="#3d7bc6" stroke-width="1.4"/></svg>
<div class="t" style="left:1433px;top:268.00px;font-size:11.9px;color:#262626;">Вставить</div>
<svg class="a" style="left:1453.0px;top:286px" width="7" height="4" viewBox="0 0 7 4" ><path d="M0 0H7L3.5 3.5Z" fill="#606060"/></svg>
<svg class="a" style="left:1491px;top:230px" width="34" height="32" viewBox="0 0 34 32" ><path d="M1.5 2.5H13.5V7.5H1.5Z M7.5 2.5V7.5 M1.5 16.5H13.5V26.5H1.5Z M1.5 21.5H13.5M7.5 16.5V26.5" fill="#fff" stroke="#707070" stroke-width="1"/><path d="M7.5 9.5H19.5V14.5H7.5Z" fill="#bcd4ee" stroke="#707070" stroke-width="1"/><path d="M16 6L28 18M28 6L16 18" stroke="#e0674b" stroke-width="1.8"/></svg>
<div class="t" style="left:1485px;top:268.00px;font-size:11.9px;color:#262626;">Удалить</div>
<svg class="a" style="left:1503.5px;top:286px" width="7" height="4" viewBox="0 0 7 4" ><path d="M0 0H7L3.5 3.5Z" fill="#606060"/></svg>
<svg class="a" style="left:1540px;top:230px" width="34" height="32" viewBox="0 0 34 32" ><path d="M3.5 3.5H30.5M3.5 1.5V5.5M30.5 1.5V5.5M6 3.5L8 2M6 3.5L8 5M28 3.5L26 2M28 3.5L26 5" stroke="#3d7bc6" stroke-width="1" fill="none"/><rect x="2.5" y="7.5" width="28" height="21" fill="#fff" stroke="#707070" stroke-width="1"/><path d="M2.5 12.5H30.5M2.5 17.5H30.5M2.5 22.5H30.5M9.5 7.5V28.5M16.5 7.5V28.5M23.5 7.5V28.5" stroke="#a0a0a0" stroke-width="1"/><rect x="10" y="13" width="7" height="9" fill="#3d7bc6"/></svg>
<div class="t" style="left:1534px;top:268.00px;font-size:11.9px;color:#262626;">Формат</div>
<svg class="a" style="left:1552.0px;top:286px" width="7" height="4" viewBox="0 0 7 4" ><path d="M0 0H7L3.5 3.5Z" fill="#606060"/></svg>
<svg class="a" style="left:1590px;top:228px" width="20" height="18" viewBox="0 0 20 18" ><path d="M2.5 2.5H16.5V5M2.5 2.5L9.5 9L2.5 15.5H16.5V13" fill="none" stroke="#444" stroke-width="2.2" stroke-linejoin="miter"/></svg>
<div class="t" style="left:1611.4px;top:233.00px;font-size:11.9px;color:#262626;">Автосумма</div>
<svg class="a" style="left:1681.5px;top:236px" width="7" height="4" viewBox="0 0 7 4" ><path d="M0 0H7L3.5 3.5Z" fill="#606060"/></svg>
<svg class="a" style="left:1592px;top:251px" width="18" height="18" viewBox="0 0 18 18" ><rect x="1.5" y="1.5" width="14" height="15" fill="#fff" stroke="#707070" stroke-width="1"/><rect x="1.5" y="1.5" width="14" height="3" fill="#707070"/><path d="M8.5 6V14M5.5 11L8.5 14L11.5 11" fill="none" stroke="#3d7bc6" stroke-width="1.5"/></svg>
<div class="t" style="left:1611.4px;top:256.00px;font-size:11.9px;color:#262626;">Заполнить</div>
<svg class="a" style="left:1672.0px;top:258px" width="7" height="4" viewBox="0 0 7 4" ><path d="M0 0H7L3.5 3.5Z" fill="#606060"/></svg>
<svg class="a" style="left:1592px;top:274px" width="20" height="16" viewBox="0 0 20 16" ><path d="M2 9L9 2L15 7L9 13H5Z" fill="#e77d8e"/><path d="M3 14.5H16" stroke="#707070" stroke-width="1"/></svg>
<div class="t" style="left:1611.4px;top:279.00px;font-size:11.9px;color:#262626;">Очистить</div>
<svg class="a" style="left:1665.5px;top:281px" width="7" height="4" viewBox="0 0 7 4" ><path d="M0 0H7L3.5 3.5Z" fill="#606060"/></svg>
<svg class="a" style="left:1711px;top:230px" width="34" height="32" viewBox="0 0 34 32" ><text x="0.5" y="14.5" font-family="Liberation Sans" font-size="16.5" font-weight="bold" fill="#3d7bc6">A</text><text x="1.5" y="29" font-family="Liberation Sans" font-size="15.5" font-weight="bold" fill="#9b59b6">Я</text><path d="M13.5 11H31L24.5 18.5V29H20V18.5Z" fill="#7a7a7a"/><path d="M21.3 19V27.5H23.2V19Z" fill="#fff"/></svg>
<div class="t" style="left:1695px;top:268.00px;font-size:11.9px;color:#262626;">Сортировка</div>
<div class="t" style="left:1700px;top:283.00px;font-size:11.9px;color:#262626;">и фильтр</div>
<svg class="a" style="left:1750.5px;top:285px" width="7" height="4" viewBox="0 0 7 4" ><path d="M0 0H7L3.5 3.5Z" fill="#606060"/></svg>
<svg class="a" style="left:1778px;top:229px" width="34" height="34" viewBox="0 0 34 34" ><circle cx="20" cy="11.8" r="9" fill="#fff" stroke="#3d7bc6" stroke-width="2.6"/><path d="M13.5 18.5L5.5 26.5" stroke="#3d7bc6" stroke-width="3.6" stroke-linecap="round"/></svg>
<div class="t" style="left:1774px;top:268.00px;font-size:11.9px;color:#262626;">Найти и</div>
<div class="t" style="left:1766px;top:283.00px;font-size:11.9px;color:#262626;">выделить</div>
<svg class="a" style="left:1820.0px;top:285px" width="7" height="4" viewBox="0 0 7 4" ><path d="M0 0H7L3.5 3.5Z" fill="#606060"/></svg><div class="a" style="left:70px;top:316px;width:1842px;height:46px;background:#e6e6e6;"></div>
<div class="a" style="left:75px;top:326px;width:102px;height:26px;background:#fff;border:1px solid #c6c6c6"></div>
<div class="t" style="left:82.5px;top:333.00px;font-size:13.2px;color:#222;">A1</div>
<svg class="a" style="left:161px;top:335px" width="11" height="7" viewBox="0 0 11 7" ><path d="M1 1H10L5.5 6Z" fill="#6d6d6d"/></svg>
<div class="a" style="left:191px;top:334px;width:2px;height:2px;background:#9a9a9a;"></div>
<div class="a" style="left:191px;top:338.5px;width:2px;height:2px;background:#9a9a9a;"></div>
<div class="a" style="left:191px;top:343px;width:2px;height:2px;background:#9a9a9a;"></div>
<div class="a" style="left:207px;top:326.5px;width:110px;height:25px;background:#fff;border:1px solid #c6c6c6"></div>
<svg class="a" style="left:218px;top:332px" width="14" height="12" viewBox="0 0 14 12" ><path d="M2 1L12 11M12 1L2 11" stroke="#bdbdbd" stroke-width="1.4"/></svg>
<svg class="a" style="left:254px;top:331px" width="18" height="14" viewBox="0 0 18 14" ><path d="M2 7L6.5 12L16 2" fill="none" stroke="#bdbdbd" stroke-width="1.8"/></svg>
<div class="t" style="left:291px;top:332.00px;font-size:14px;color:#555;font-family:"Liberation Serif",serif"><i>f</i><span style="font-size:10px"><i>x</i></span></div>
<div class="a" style="left:320px;top:326.5px;width:1586px;height:25px;background:#fff;border:1px solid #c6c6c6"></div>
<div class="t" style="left:332.6px;top:333.00px;font-size:13.6px;color:#222;">Наименование</div>
<svg class="a" style="left:1891px;top:333px" width="14" height="10" viewBox="0 0 14 10" ><path d="M2 2.5L7 7.5L12 2.5" fill="none" stroke="#555" stroke-width="1.5"/></svg>
<div class="a" style="left:70px;top:362px;width:1821px;height:443px;background:#fff;"></div>
<div class="a" style="left:70px;top:362px;width:1821px;height:19px;background:#e6e6e6;"></div>
<div class="a" style="left:70px;top:381px;width:25px;height:424px;background:#e6e6e6;"></div>
<div class="a" style="left:95.5px;top:362px;width:97px;height:19px;background:#d2d2d2;"></div>
<div class="a" style="left:70px;top:381px;width:25px;height:20px;background:#d2d2d2;"></div>
<div class="a" style="left:96px;top:382px;width:1794.5px;height:19px;background:#c6d9f0;"></div>
<div class="a" style="left:96px;top:401px;width:1794.5px;height:1px;background:#d4d4d4;"></div>
<div class="a" style="left:70px;top:401px;width:25px;height:1px;background:#c4c4c4;"></div>
<div class="a" style="left:96px;top:421px;width:1794.5px;height:1px;background:#d4d4d4;"></div>
<div class="a" style="left:70px;top:421px;width:25px;height:1px;background:#c4c4c4;"></div>
<div class="a" style="left:96px;top:441px;width:1794.5px;height:1px;background:#d4d4d4;"></div>
<div class="a" style="left:70px;top:441px;width:25px;height:1px;background:#c4c4c4;"></div>
<div class="a" style="left:96px;top:461px;width:1794.5px;height:1px;background:#d4d4d4;"></div>
<div class="a" style="left:70px;top:461px;width:25px;height:1px;background:#c4c4c4;"></div>
<div class="a" style="left:96px;top:481px;width:1794.5px;height:1px;background:#d4d4d4;"></div>
<div class="a" style="left:70px;top:481px;width:25px;height:1px;background:#c4c4c4;"></div>
<div class="a" style="left:96px;top:501px;width:1794.5px;height:1px;background:#d4d4d4;"></div>
<div class="a" style="left:70px;top:501px;width:25px;height:1px;background:#c4c4c4;"></div>
<div class="a" style="left:96px;top:521px;width:1794.5px;height:1px;background:#d4d4d4;"></div>
<div class="a" style="left:70px;top:521px;width:25px;height:1px;background:#c4c4c4;"></div>
<div class="a" style="left:96px;top:541px;width:1794.5px;height:1px;background:#d4d4d4;"></div>
<div class="a" style="left:70px;top:541px;width:25px;height:1px;background:#c4c4c4;"></div>
<div class="a" style="left:96px;top:561px;width:1794.5px;height:1px;background:#d4d4d4;"></div>
<div class="a" style="left:70px;top:561px;width:25px;height:1px;background:#c4c4c4;"></div>
<div class="a" style="left:96px;top:581px;width:1794.5px;height:1px;background:#d4d4d4;"></div>
<div class="a" style="left:70px;top:581px;width:25px;height:1px;background:#c4c4c4;"></div>
<div class="a" style="left:96px;top:601px;width:1794.5px;height:1px;background:#d4d4d4;"></div>
<div class="a" style="left:70px;top:601px;width:25px;height:1px;background:#c4c4c4;"></div>
<div class="a" style="left:96px;top:621px;width:1794.5px;height:1px;background:#d4d4d4;"></div>
<div class="a" style="left:70px;top:621px;width:25px;height:1px;background:#c4c4c4;"></div>
<div class="a" style="left:96px;top:641px;width:1794.5px;height:1px;background:#d4d4d4;"></div>
<div class="a" style="left:70px;top:641px;width:25px;height:1px;background:#c4c4c4;"></div>
<div class="a" style="left:96px;top:661px;width:1794.5px;height:1px;background:#d4d4d4;"></div>
<div class="a" style="left:70px;top:661px;width:25px;height:1px;background:#c4c4c4;"></div>
<div class="a" style="left:96px;top:681px;width:1794.5px;height:1px;background:#d4d4d4;"></div>
<div class="a" style="left:70px;top:681px;width:25px;height:1px;background:#c4c4c4;"></div>
<div class="a" style="left:96px;top:701px;width:1794.5px;height:1px;background:#d4d4d4;"></div>
<div class="a" style="left:70px;top:701px;width:25px;height:1px;background:#c4c4c4;"></div>
<div class="a" style="left:96px;top:721px;width:1794.5px;height:1px;background:#d4d4d4;"></div>
<div class="a" style="left:70px;top:721px;width:25px;height:1px;background:#c4c4c4;"></div>
<div class="a" style="left:96px;top:741px;width:1794.5px;height:1px;background:#d4d4d4;"></div>
<div class="a" style="left:70px;top:741px;width:25px;height:1px;background:#c4c4c4;"></div>
<div class="a" style="left:96px;top:761px;width:1794.5px;height:1px;background:#d4d4d4;"></div>
<div class="a" style="left:70px;top:761px;width:25px;height:1px;background:#c4c4c4;"></div>
<div class="a" style="left:96px;top:781px;width:1794.5px;height:1px;background:#d4d4d4;"></div>
<div class="a" style="left:70px;top:781px;width:25px;height:1px;background:#c4c4c4;"></div>
<div class="a" style="left:96px;top:801px;width:1794.5px;height:1px;background:#d4d4d4;"></div>
<div class="a" style="left:70px;top:801px;width:25px;height:1px;background:#c4c4c4;"></div>
<div class="a" style="left:96px;top:821px;width:1794.5px;height:1px;background:#d4d4d4;"></div>
<div class="a" style="left:70px;top:821px;width:25px;height:1px;background:#c4c4c4;"></div>
<div class="a" style="left:192.0px;top:381px;width:1px;height:424px;background:#d4d4d4;"></div>
<div class="a" style="left:192.0px;top:362px;width:1px;height:19px;background:#c8c8c8;"></div>
<div class="a" style="left:317.0px;top:381px;width:1px;height:424px;background:#d4d4d4;"></div>
<div class="a" style="left:317.0px;top:362px;width:1px;height:19px;background:#c8c8c8;"></div>
<div class="a" style="left:393.0px;top:381px;width:1px;height:424px;background:#d4d4d4;"></div>
<div class="a" style="left:393.0px;top:362px;width:1px;height:19px;background:#c8c8c8;"></div>
<div class="a" style="left:469.0px;top:381px;width:1px;height:424px;background:#d4d4d4;"></div>
<div class="a" style="left:469.0px;top:362px;width:1px;height:19px;background:#c8c8c8;"></div>
<div class="a" style="left:545.0px;top:381px;width:1px;height:424px;background:#d4d4d4;"></div>
<div class="a" style="left:545.0px;top:362px;width:1px;height:19px;background:#c8c8c8;"></div>
<div class="a" style="left:677.0px;top:381px;width:1px;height:424px;background:#d4d4d4;"></div>
<div class="a" style="left:677.0px;top:362px;width:1px;height:19px;background:#c8c8c8;"></div>
<div class="a" style="left:823.0px;top:381px;width:1px;height:424px;background:#d4d4d4;"></div>
<div class="a" style="left:823.0px;top:362px;width:1px;height:19px;background:#c8c8c8;"></div>
<div class="a" style="left:997.0px;top:381px;width:1px;height:424px;background:#d4d4d4;"></div>
<div class="a" style="left:997.0px;top:362px;width:1px;height:19px;background:#c8c8c8;"></div>
<div class="a" style="left:1108.0px;top:381px;width:1px;height:424px;background:#d4d4d4;"></div>
<div class="a" style="left:1108.0px;top:362px;width:1px;height:19px;background:#c8c8c8;"></div>
<div class="a" style="left:1184.0px;top:381px;width:1px;height:424px;background:#d4d4d4;"></div>
<div class="a" style="left:1184.0px;top:362px;width:1px;height:19px;background:#c8c8c8;"></div>
<div class="a" style="left:1330.0px;top:381px;width:1px;height:424px;background:#d4d4d4;"></div>
<div class="a" style="left:1330.0px;top:362px;width:1px;height:19px;background:#c8c8c8;"></div>
<div class="a" style="left:1420.0px;top:381px;width:1px;height:424px;background:#d4d4d4;"></div>
<div class="a" style="left:1420.0px;top:362px;width:1px;height:19px;background:#c8c8c8;"></div>
<div class="a" style="left:1594.0px;top:381px;width:1px;height:424px;background:#d4d4d4;"></div>
<div class="a" style="left:1594.0px;top:362px;width:1px;height:19px;background:#c8c8c8;"></div>
<div class="a" style="left:1670.0px;top:381px;width:1px;height:424px;background:#d4d4d4;"></div>
<div class="a" style="left:1670.0px;top:362px;width:1px;height:19px;background:#c8c8c8;"></div>
<div class="a" style="left:1746.0px;top:381px;width:1px;height:424px;background:#d4d4d4;"></div>
<div class="a" style="left:1746.0px;top:362px;width:1px;height:19px;background:#c8c8c8;"></div>
<div class="a" style="left:1822.0px;top:381px;width:1px;height:424px;background:#d4d4d4;"></div>
<div class="a" style="left:1822.0px;top:362px;width:1px;height:19px;background:#c8c8c8;"></div>
<div class="a" style="left:1890.0px;top:381px;width:1px;height:424px;background:#d4d4d4;"></div>
<div class="a" style="left:1890.0px;top:362px;width:1px;height:19px;background:#c8c8c8;"></div>
<div class="a" style="left:70px;top:380.5px;width:1821px;height:1px;background:#ababab;"></div>
<div class="a" style="left:94.5px;top:362px;width:1px;height:443px;background:#ababab;"></div>
<svg class="a" style="left:78px;top:365px" width="16" height="15" viewBox="0 0 16 15" ><path d="M14 2V13H3Z" fill="#b4b4b4"/></svg>
<div class="t" style="left:95px;width:97.5px;text-align:center;top:366.26px;font-size:13.4px;color:#217346">A</div>
<div class="t" style="left:192.5px;width:125.0px;text-align:center;top:366.26px;font-size:13.4px;color:#333">B</div>
<div class="t" style="left:317.5px;width:76.0px;text-align:center;top:366.26px;font-size:13.4px;color:#333">C</div>
<div class="t" style="left:393.5px;width:76.0px;text-align:center;top:366.26px;font-size:13.4px;color:#333">D</div>
<div class="t" style="left:469.5px;width:76.0px;text-align:center;top:366.26px;font-size:13.4px;color:#333">E</div>
<div class="t" style="left:545.5px;width:132.0px;text-align:center;top:366.26px;font-size:13.4px;color:#333">F</div>
<div class="t" style="left:677.5px;width:146.0px;text-align:center;top:366.26px;font-size:13.4px;color:#333">G</div>
<div class="t" style="left:823.5px;width:174.0px;text-align:center;top:366.26px;font-size:13.4px;color:#333">H</div>
<div class="t" style="left:997.5px;width:111.0px;text-align:center;top:366.26px;font-size:13.4px;color:#333">I</div>
<div class="t" style="left:1108.5px;width:76.0px;text-align:center;top:366.26px;font-size:13.4px;color:#333">J</div>
<div class="t" style="left:1184.5px;width:146.0px;text-align:center;top:366.26px;font-size:13.4px;color:#333">K</div>
<div class="t" style="left:1330.5px;width:90.0px;text-align:center;top:366.26px;font-size:13.4px;color:#333">L</div>
<div class="t" style="left:1420.5px;width:174.0px;text-align:center;top:366.26px;font-size:13.4px;color:#333">M</div>
<div class="t" style="left:1594.5px;width:76.0px;text-align:center;top:366.26px;font-size:13.4px;color:#333">N</div>
<div class="t" style="left:1670.5px;width:76.0px;text-align:center;top:366.26px;font-size:13.4px;color:#333">O</div>
<div class="t" style="left:1746.5px;width:76.0px;text-align:center;top:366.26px;font-size:13.4px;color:#333">P</div>
<div class="t" style="left:1822.5px;width:68.0px;text-align:center;top:366.26px;font-size:13.4px;color:#333">Q</div>
<div class="t" style="left:70px;width:25px;text-align:center;top:385.66px;font-size:13.4px;color:#217346">1</div>
<div class="t" style="left:70px;width:25px;text-align:center;top:405.66px;font-size:13.4px;color:#222">2</div>
<div class="t" style="left:70px;width:25px;text-align:center;top:425.66px;font-size:13.4px;color:#222">3</div>
<div class="t" style="left:70px;width:25px;text-align:center;top:445.66px;font-size:13.4px;color:#222">4</div>
<div class="t" style="left:70px;width:25px;text-align:center;top:465.66px;font-size:13.4px;color:#222">5</div>
<div class="t" style="left:70px;width:25px;text-align:center;top:485.66px;font-size:13.4px;color:#222">6</div>
<div class="t" style="left:70px;width:25px;text-align:center;top:505.66px;font-size:13.4px;color:#222">7</div>
<div class="t" style="left:70px;width:25px;text-align:center;top:525.66px;font-size:13.4px;color:#222">8</div>
<div class="t" style="left:70px;width:25px;text-align:center;top:545.66px;font-size:13.4px;color:#222">9</div>
<div class="t" style="left:70px;width:25px;text-align:center;top:565.66px;font-size:13.4px;color:#222">10</div>
<div class="t" style="left:70px;width:25px;text-align:center;top:585.66px;font-size:13.4px;color:#222">11</div>
<div class="t" style="left:70px;width:25px;text-align:center;top:605.66px;font-size:13.4px;color:#222">12</div>
<div class="t" style="left:70px;width:25px;text-align:center;top:625.66px;font-size:13.4px;color:#222">13</div>
<div class="t" style="left:70px;width:25px;text-align:center;top:645.66px;font-size:13.4px;color:#222">14</div>
<div class="t" style="left:70px;width:25px;text-align:center;top:665.66px;font-size:13.4px;color:#222">15</div>
<div class="t" style="left:70px;width:25px;text-align:center;top:685.66px;font-size:13.4px;color:#222">16</div>
<div class="t" style="left:70px;width:25px;text-align:center;top:705.66px;font-size:13.4px;color:#222">17</div>
<div class="t" style="left:70px;width:25px;text-align:center;top:725.66px;font-size:13.4px;color:#222">18</div>
<div class="t" style="left:70px;width:25px;text-align:center;top:745.66px;font-size:13.4px;color:#222">19</div>
<div class="t" style="left:70px;width:25px;text-align:center;top:765.66px;font-size:13.4px;color:#222">20</div>
<div class="t" style="left:70px;width:25px;text-align:center;top:785.66px;font-size:13.4px;color:#222">21</div>
<div class="a" style="left:96px;top:383px;width:94.5px;height:18px;overflow:hidden"><div class="t" style="left:1.5px;top:3.00px;font-size:13.6px;color:#000">Наименование</div></div>
<div class="a" style="left:193.5px;top:383px;width:122.0px;height:18px;overflow:hidden"><div class="t" style="left:1.5px;top:3.00px;font-size:13.6px;color:#000">Тип номенклатуры</div></div>
<div class="a" style="left:318.5px;top:383px;width:73.0px;height:18px;overflow:hidden"><div class="t" style="left:1.5px;top:3.00px;font-size:13.6px;color:#000">Артикул</div></div>
<div class="a" style="left:394.5px;top:383px;width:73.0px;height:18px;overflow:hidden"><div class="t" style="left:1.5px;top:3.00px;font-size:13.6px;color:#000">Код НН</div></div>
<div class="a" style="left:470.5px;top:383px;width:73.0px;height:18px;overflow:hidden"><div class="t" style="left:1.5px;top:3.00px;font-size:13.6px;color:#000">Ед. изм.</div></div>
<div class="a" style="left:546.5px;top:383px;width:129.0px;height:18px;overflow:hidden"><div class="t" style="left:1.5px;top:3.00px;font-size:13.6px;color:#000">Категория розницы</div></div>
<div class="a" style="left:678.5px;top:383px;width:143.0px;height:18px;overflow:hidden"><div class="t" style="left:1.5px;top:3.00px;font-size:13.6px;color:#000">Направление розницы</div></div>
<div class="a" style="left:824.5px;top:383px;width:171.0px;height:18px;overflow:hidden"><div class="t" style="left:1.5px;top:3.00px;font-size:13.6px;color:#000">Счет учета затрат</div></div>
<div class="a" style="left:998.5px;top:383px;width:108.0px;height:18px;overflow:hidden"><div class="t" style="left:1.5px;top:3.00px;font-size:13.6px;color:#000">Штрих-код</div></div>
<div class="a" style="left:1109.5px;top:383px;width:73.0px;height:18px;overflow:hidden"><div class="t" style="left:1.5px;top:3.00px;font-size:13.6px;color:#000">Группа</div></div>
<div class="a" style="left:1185.5px;top:383px;width:143.0px;height:18px;overflow:hidden"><div class="t" style="left:1.5px;top:3.00px;font-size:13.6px;color:#000">Минимальный остаток</div></div>
<div class="a" style="left:1331.5px;top:383px;width:87.0px;height:18px;overflow:hidden"><div class="t" style="left:1.5px;top:3.00px;font-size:13.6px;color:#000">Модификация</div></div>
<div class="a" style="left:1421.5px;top:383px;width:171.0px;height:18px;overflow:hidden"><div class="t" style="left:1.5px;top:3.00px;font-size:13.6px;color:#000">Наименование для печати</div></div>
<div class="a" style="left:1595.5px;top:383px;width:73.0px;height:18px;overflow:hidden"><div class="t" style="left:1.5px;top:3.00px;font-size:13.6px;color:#000">Вес</div></div>
<div class="a" style="left:1671.5px;top:383px;width:73.0px;height:18px;overflow:hidden"><div class="t" style="left:1.5px;top:3.00px;font-size:13.6px;color:#000">Длинна</div></div>
<div class="a" style="left:1747.5px;top:383px;width:73.0px;height:18px;overflow:hidden"><div class="t" style="left:1.5px;top:3.00px;font-size:13.6px;color:#000">Ширина</div></div>
<div class="a" style="left:1823.5px;top:383px;width:65.0px;height:18px;overflow:hidden"><div class="t" style="left:1.5px;top:3.00px;font-size:13.6px;color:#000">Высота</div></div>
<div class="t" style="left:97.5px;top:406.00px;font-size:13.6px;color:#000;">Карбон</div>
<div class="t" style="left:195.0px;top:406.00px;font-size:13.6px;color:#000;">Товар</div>
<div class="t" style="left:320.0px;top:406.00px;font-size:13.6px;color:#000;letter-spacing:-0.45px">0321132</div>
<div class="t" style="left:396.0px;top:406.00px;font-size:13.6px;color:#000;letter-spacing:-0.45px">9088</div>
<div class="t" style="left:472.0px;top:406.00px;font-size:13.6px;color:#000;">м</div>
<div class="t" style="left:548.0px;top:406.00px;font-size:13.6px;color:#000;">Запчастини</div>
<div class="a" style="left:824.5px;top:403px;width:171.0px;height:18px;overflow:hidden"><div class="t" style="left:1.5px;top:3.00px;font-size:13.6px;color:#000">Незавершене виробництво</div></div>
<div class="t" style="left:1000.0px;top:406.00px;font-size:13.6px;color:#000;letter-spacing:-0.45px">48200014950110</div>
<div class="t" style="left:1111.0px;top:406.00px;font-size:13.6px;color:#000;">Матеріали</div>
<div class="t" style="left:1186.5px;width:141.0px;text-align:right;top:406.00px;font-size:13.6px;color:#000;">599</div>
<div class="t" style="left:97.5px;top:426.00px;font-size:13.6px;color:#000;">Запчастини</div>
<div class="t" style="left:195.0px;top:426.00px;font-size:13.6px;color:#000;">Товар</div>
<div class="t" style="left:320.0px;top:426.00px;font-size:13.6px;color:#000;letter-spacing:-0.45px">001213</div>
<div class="t" style="left:396.0px;top:426.00px;font-size:13.6px;color:#000;letter-spacing:-0.45px">999</div>
<div class="t" style="left:472.0px;top:426.00px;font-size:13.6px;color:#000;">шт</div>
<div class="t" style="left:548.0px;top:426.00px;font-size:13.6px;color:#000;">Запчастини</div>
<div class="a" style="left:824.5px;top:423px;width:171.0px;height:18px;overflow:hidden"><div class="t" style="left:1.5px;top:3.00px;font-size:13.6px;color:#000">Незавершене виробництво</div></div>
<div class="t" style="left:1000.0px;top:426.00px;font-size:13.6px;color:#000;letter-spacing:-0.45px">4820002215082</div>
<div class="t" style="left:1111.0px;top:426.00px;font-size:13.6px;color:#000;">Деталі</div>
<div class="t" style="left:1186.5px;width:141.0px;text-align:right;top:426.00px;font-size:13.6px;color:#000;">0</div>
<div class="a" style="left:94px;top:380px;width:100px;height:23px;background:transparent;border:2px solid #217346"></div>
<div class="a" style="left:189px;top:398px;width:7px;height:7px;background:#217346;border:1px solid #fff"></div>
<div class="a" style="left:70px;top:805px;width:1842px;height:1px;background:#9c9c9c;"></div>
<div class="a" style="left:70px;top:806px;width:1842px;height:27px;background:#e6e6e6;"></div>
<div class="a" style="left:170.5px;top:805px;width:56px;height:24px;background:#fff;border-left:1px solid #c6c6c6;border-right:1px solid #c6c6c6"></div>
<div class="a" style="left:170.5px;top:828px;width:56px;height:2px;background:#217346;"></div>
<div class="t" style="left:182px;top:813.00px;font-size:12.6px;color:#217346;font-weight:bold;">sheet</div>
<svg class="a" style="left:94px;top:813px" width="40" height="12" viewBox="0 0 40 12" ><path d="M7.5 1.5V10.5L3 6Z" fill="#a8a8a8"/><path d="M31 1.5V10.5L35.5 6Z" fill="#a8a8a8"/></svg>
<svg class="a" style="left:258px;top:809px" width="20" height="20" viewBox="0 0 20 20" ><circle cx="10" cy="10" r="7.7" fill="none" stroke="#666" stroke-width="1.1"/><path d="M10 5.5V14.5M5.5 10H14.5" stroke="#555" stroke-width="1.8"/></svg>
<div class="a" style="left:1175px;top:814.5px;width:2px;height:2px;background:#9a9a9a;"></div>
<div class="a" style="left:1175px;top:818.5px;width:2px;height:2px;background:#9a9a9a;"></div>
<div class="a" style="left:1175px;top:822.5px;width:2px;height:2px;background:#9a9a9a;"></div>
<div class="a" style="left:1192.5px;top:812px;width:698px;height:15px;background:#dcdcdc;border:1px solid #c6c6c6"></div>
<div class="a" style="left:1192.5px;top:812px;width:582px;height:15px;background:#fff;border:1px solid #c6c6c6"></div>
<div class="a" style="left:1192.5px;top:812px;width:15px;height:15px;background:#fff;border:1px solid #c6c6c6"></div>
<div class="a" style="left:1876px;top:812px;width:15px;height:15px;background:#fff;border:1px solid #c6c6c6"></div>
<svg class="a" style="left:1193px;top:812px" width="15" height="15" viewBox="0 0 15 15" ><path d="M9.5 3.5V11.5L5 7.5Z" fill="#606060"/></svg>
<svg class="a" style="left:1876px;top:812px" width="15" height="15" viewBox="0 0 15 15" ><path d="M5.5 3.5V11.5L10 7.5Z" fill="#606060"/></svg>
<div class="a" style="left:1891px;top:362px;width:21px;height:443px;background:#e6e6e6;"></div>
<div class="a" style="left:1894.5px;top:364.5px;width:14px;height:405px;background:#fff;border:1px solid #c6c6c6"></div>
<div class="a" style="left:1894.5px;top:378.5px;width:14px;height:1px;background:#c6c6c6;"></div>
<div class="a" style="left:1894.5px;top:791px;width:14px;height:14px;background:#fff;border:1px solid #c6c6c6"></div>
<div class="a" style="left:1894.5px;top:769.5px;width:14px;height:21.5px;background:#dcdcdc;"></div>
<svg class="a" style="left:1894.5px;top:365px" width="14" height="14" viewBox="0 0 14 14" ><path d="M3.5 9H10.5L7 5.5Z" fill="#606060"/></svg>
<svg class="a" style="left:1894.5px;top:791px" width="14" height="14" viewBox="0 0 14 14" ><path d="M3.5 5H10.5L7 8.5Z" fill="#606060"/></svg>
<div class="a" style="left:1890px;top:362px;width:1px;height:443px;background:#ababab;"></div>
<div class="a" style="left:70px;top:833px;width:1842px;height:1px;background:#d0d0d0;"></div>
<div class="a" style="left:70px;top:834px;width:1842px;height:21px;background:#f1f1f1;"></div>
<div class="t" style="left:77.7px;top:839.00px;font-size:11.8px;color:#444;">Готово</div>
<div class="a" style="left:1609px;top:834px;width:38px;height:21px;background:#c6c6c6;"></div>
<svg class="a" style="left:1618px;top:835px" width="20" height="18" viewBox="0 0 20 18" ><path d="M3.5 2.5H16.5V15.5H3.5Z M3.5 6.8H16.5M3.5 11.2H16.5M7.8 2.5V15.5M12.2 2.5V15.5" fill="none" stroke="#666" stroke-width="1.2"/></svg>
<svg class="a" style="left:1656px;top:835px" width="20" height="18" viewBox="0 0 20 18" ><rect x="3.5" y="2.5" width="13" height="13" fill="none" stroke="#555" stroke-width="1"/><rect x="5.5" y="4.5" width="9" height="9" fill="none" stroke="#555" stroke-width="1"/><path d="M7 7H13M7 9H13M7 11H13" stroke="#555" stroke-width="0.9"/></svg>
<svg class="a" style="left:1694px;top:835px" width="20" height="18" viewBox="0 0 20 18" ><rect x="3.5" y="2.5" width="13" height="13" fill="none" stroke="#555" stroke-width="1"/><path d="M3.5 8.5H13.5V2.5M7.5 2.5V8.5" fill="none" stroke="#555" stroke-width="1"/></svg>
<div class="a" style="left:1726.5px;top:843px;width:7px;height:2px;background:#444;"></div>
<div class="a" style="left:1738px;top:843.5px;width:100px;height:1px;background:#9a9a9a;"></div>
<div class="a" style="left:1786.5px;top:838.5px;width:3.5px;height:11px;background:#555;"></div>
<svg class="a" style="left:1840px;top:837px" width="13" height="13" viewBox="0 0 13 13" ><path d="M6.5 1.5V11.5M1.5 6.5H11.5" stroke="#444" stroke-width="1.8"/></svg>
<div class="t" style="left:1865.5px;top:839.00px;font-size:11.2px;color:#444;">100%</div>
</body></html>
